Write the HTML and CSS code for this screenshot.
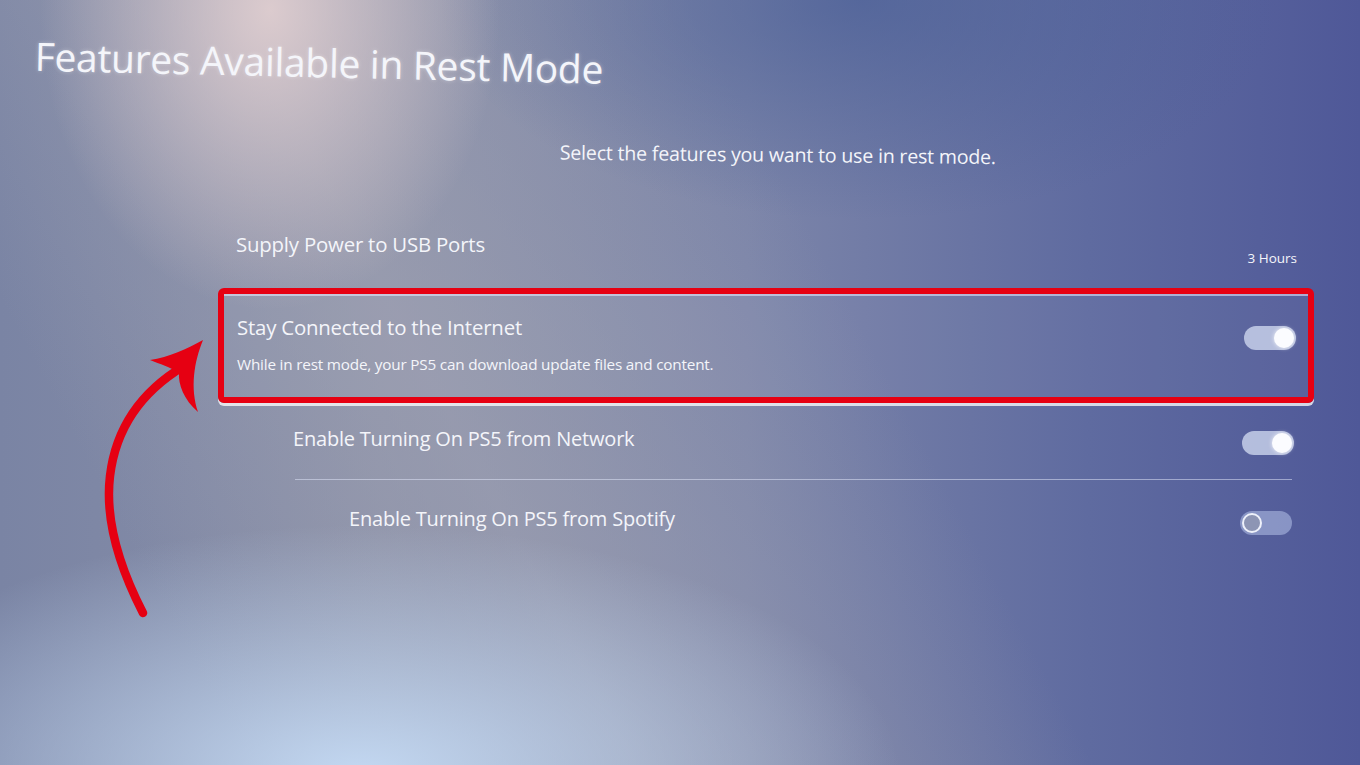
FILE: index.html
```html
<!DOCTYPE html>
<html>
<head>
	<title>Features Available in Rest Mode</title>
	<link rel="stylesheet" href="styles.css">
</head>
<body>
	<div class="screen">
		<h1 class="PageTitle">Features Available in Rest Mode</h1>

		<div class="panel">
			<p class="intro">Select the features you want to use in rest mode.</p>

			<div class="row usb">
				<div class="label">Supply Power to USB Ports</div>
				<div class="value">3 Hours</div>
			</div>

			<div class="row focused">
				<div class="text">
					<div class="label">Stay Connected to the Internet</div>
					<div class="desc">While in rest mode, your PS5 can download update files and content.</div>
				</div>
				<span class="switch on"><span class="knob"></span></span>
			</div>

			<div class="row sub">
				<div class="label">Enable Turning On PS5 from Network</div>
				<span class="switch on"><span class="knob"></span></span>
			</div>

			<div class="row subsub">
				<div class="label">Enable Turning On PS5 from Spotify</div>
				<span class="switch off"><span class="knob"></span></span>
			</div>
		</div>

		<!-- hand drawn arrow pointing at the highlighted option -->
		<svg class="arrow" width="140" height="300" viewBox="0 0 140 300">
			<path d="M59 287 C 40 250, 20 200, 26 150 C 32 100, 60 64, 100 40" fill="none" stroke="#e60012" stroke-width="8.5" stroke-linecap="round"/>
			<path d="M66 34 C 85 31, 103 23, 119 14 C 110 36, 106 62, 114 86 C 100 74, 94 58, 95 47 C 86 41, 76 38, 66 34 Z" fill="#e60012"/>
		</svg>
	</div>
</body>
</html>
```

FILE: styles.css
```css
body {
	margin: 0;
	background-color: #6a74a0;
}

.screen {
	position: relative;
	width: 1360px;
	height: 765px;
	overflow: hidden;
	font-family: "Open Sans", "Noto Sans", sans-serif;
	color: #f4f5fa;
	background:
		radial-gradient(ellipse 230px 300px at 270px 10px, rgba(232, 212, 212, 0.85), rgba(232, 212, 212, 0) 100%),
		radial-gradient(ellipse 540px 250px at 360px 775px, rgba(198, 220, 246, 0.95), rgba(198, 220, 246, 0) 100%),
		radial-gradient(ellipse 420px 220px at 860px 0px, rgba(70, 92, 150, 0.65), rgba(70, 92, 150, 0) 100%),
		linear-gradient(62deg, rgba(160, 162, 178, 0) 14%, rgba(160, 162, 178, 0.6) 36%, rgba(160, 162, 178, 0) 62%),
		linear-gradient(90deg, #7a84a4 0%, #8a90a8 28%, #7c85a9 55%, #5f6ba0 80%, #4f5898 100%);
}

.PageTitle {
	margin: 0;
	padding: 28px 0 0 36px;
	font-size: 39px;
	font-weight: 400;
	letter-spacing: -0.3px;
	transform: rotate(1.3deg);
	transform-origin: left top;
	text-shadow: 0 0 4px rgba(255, 255, 255, 0.35);
}

.panel {
	width: 1096px;
	margin: 0 0 0 218px;
}

.intro {
	margin: 54px 0 0 0;
	padding-left: 342px;
	font-size: 19.6px;
	letter-spacing: -0.2px;
	transform: rotate(0.6deg);
	transform-origin: left top;
}

.row {
	display: flex;
	align-items: center;
	justify-content: space-between;
	padding-right: 18px;
	box-sizing: border-box;
}

.label {
	font-size: 20.4px;
	letter-spacing: -0.2px;
}

.usb {
	height: 126px;
	align-items: flex-start;
	padding-left: 18px;
	padding-top: 68px;
}

.usb .value {
	font-size: 13.5px;
	padding-top: 19px;
	margin-right: -1px;
}

.focused {
	height: 115px;
	padding: 19px 12px 0 13px;
	align-items: flex-start;
	border: 6px solid #e60012;
	border-radius: 6px;
	background: rgba(200, 205, 225, 0.06);
	box-shadow: inset 0 2px 0 rgba(235, 235, 255, 0.55), 0 3px 0 rgba(255, 255, 255, 0.75);
}

.focused .switch {
	margin-top: 13px;
}

.desc {
	margin-top: 13px;
	font-size: 15.3px;
	letter-spacing: -0.2px;
}

.sub {
	height: 77px;
	padding-left: 75px;
	padding-right: 20px;
	padding-bottom: 6px;
	position: relative;
}

.sub::after {
	content: "";
	position: absolute;
	left: 77px;
	right: 22px;
	bottom: 0;
	height: 1px;
	background: rgba(220, 226, 245, 0.55);
}

.subsub {
	height: 77px;
	padding-left: 131px;
	padding-right: 22px;
}

.sub .label,
.subsub .label {
	font-size: 20px;
}

.sub .switch,
.subsub .switch {
	margin-top: 8px;
}

.switch {
	display: flex;
	align-items: center;
	width: 52px;
	height: 24px;
	border-radius: 12px;
	box-sizing: border-box;
	padding: 0 2px;
}

.switch.on {
	justify-content: flex-end;
	background: rgba(208, 216, 240, 0.78);
}

.switch.off {
	justify-content: flex-start;
	background: rgba(160, 172, 215, 0.7);
}

.knob {
	width: 20px;
	height: 20px;
	border-radius: 50%;
	box-sizing: border-box;
}

.switch.on .knob {
	background: #fbfcff;
	box-shadow: 0 0 4px rgba(255, 255, 255, 0.8);
}

.switch.off .knob {
	border: 2px solid #eef1fa;
	background: #8d95b4;
}

.arrow {
	position: absolute;
	left: 84px;
	top: 326px;
}
```
